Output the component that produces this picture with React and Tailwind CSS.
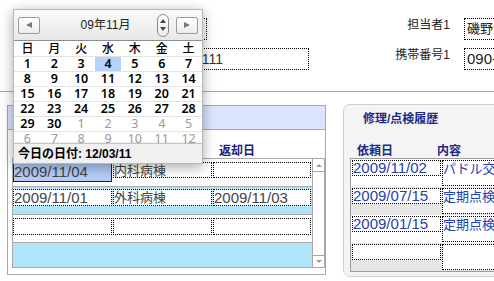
const weekDays = ["日", "月", "火", "水", "木", "金", "土"];

const dateRows = [
    [1, 2, 3, 4, 5, 6, 7],
    [8, 9, 10, 11, 12, 13, 14],
    [15, 16, 17, 18, 19, 20, 21],
    [22, 23, 24, 25, 26, 27, 28],
    [29, 30, "1", "2", "3", "4", "5"],
    ["6", "7", "8", "9", "10", "11", "12"],
];

const loans = [
    { out: "2009/11/04", ward: "内科病棟", back: "", active: true },
    { out: "2009/11/01", ward: "外科病棟", back: "2009/11/03" },
    { out: "", ward: "", back: "" },
    null,
];

const repairs = [
    { date: "2009/11/02", text: "パドル交換" },
    { date: "2009/07/15", text: "定期点検(" },
    { date: "2009/01/15", text: "定期点検" },
    { date: "", text: "" },
];

function Calendar() {
    return (
        <div className="absolute left-[13px] top-[9px] w-[190px] h-[155px] bg-white border border-[#b8b8b8] shadow-[0_3px_12px_rgba(0,0,0,0.35)] flex flex-col overflow-hidden">
            <div className="h-[31px] shrink-0 bg-gradient-to-b from-[#fafafa] to-[#e8e8e8] border-b border-[#8c8c8c] flex items-center px-[4px]">
                <button className="w-[22px] h-[17px] border border-[#9a9a9a] rounded-[2px] bg-gradient-to-b from-white to-[#ececec] flex items-center justify-center">
                    <span className="block w-0 h-0 border-y-[3px] border-y-transparent border-r-[6px] border-r-[#777]" />
                </button>
                <div className="flex-1 text-center text-[12px] text-[#222] pl-[14px]">09年11月</div>
                <div className="w-[12px] h-[23px] border border-[#8a8a8a] rounded-full bg-gradient-to-b from-white to-[#eee] flex flex-col items-center justify-center gap-[4px] mr-[7px]">
                    <span className="block w-0 h-0 border-x-[3px] border-x-transparent border-b-[4px] border-b-[#444]" />
                    <span className="block w-0 h-0 border-x-[3px] border-x-transparent border-t-[4px] border-t-[#444]" />
                </div>
                <button className="w-[22px] h-[17px] border border-[#9a9a9a] rounded-[2px] bg-gradient-to-b from-white to-[#ececec] flex items-center justify-center">
                    <span className="block w-0 h-0 border-y-[3px] border-y-transparent border-l-[6px] border-l-[#777]" />
                </button>
            </div>
            <div className="grid grid-cols-7 h-[16px] shrink-0 border-b border-[#e2e2e2]">
                {weekDays.map((d) => (
                    <div key={d} className="text-center text-[12px] leading-[16px] font-medium text-black">
                        {d}
                    </div>
                ))}
            </div>
            <div className="flex-1 overflow-hidden font-['Noto_Sans',sans-serif]">
                {dateRows.map((row, i) => (
                    <div key={i} className="grid grid-cols-7 h-[15px] border-b border-[#e4e4e4]">
                        {row.map((n) => (
                            <div
                                key={n}
                                className={
                                    "text-center text-[12.5px] leading-[14px] " +
                                    (typeof n === "string" ? "text-[#9a9a9a]" : "text-black font-semibold") +
                                    (n === 4 ? " bg-[#b5d3fb]" : "")
                                }
                            >
                                {n}
                            </div>
                        ))}
                    </div>
                ))}
            </div>
            <div className="h-[20px] shrink-0 bg-[#f0f0f0] border-t border-[#c4c4c4] shadow-[0_-1px_2px_rgba(0,0,0,0.08)] px-[4px] text-[12px] leading-[20px] font-bold text-black">
                今日の日付: 12/03/11
            </div>
        </div>
    );
}

function Field({ value, className = "" }) {
    const jp = /[^\x00-\x7f]/.test(value);
    return (
        <div
            className={
                "border border-dotted border-black bg-white text-[#444] whitespace-nowrap overflow-hidden " +
                (jp ? "text-[13px] leading-[15px] " : "text-[15px] leading-[15px] ") +
                className
            }
        >
            {value}
        </div>
    );
}

function LoanPanel() {
    return (
        <div className="ml-[7px] mt-[13px] w-[321px] h-[170px] border border-[#a8a8a8] bg-white flex flex-col">
            <div className="h-[24px] bg-[#dbe5ff] border-b border-[#a8a8a8]" />
            <div className="h-[28px] ml-[5px] grid grid-cols-[100px_100px_99px] items-end text-[12px] leading-[14px] font-bold text-[#1c1c80]">
                <div />
                <div />
                <div className="pl-[6px]">返却日</div>
            </div>
            <div className="ml-[4px] w-[313px] h-[110px] border border-[#a8a8a8] flex">
                <div className="w-[299px] flex flex-col">
                    {loans.map((r, i) => (
                        <div
                            key={i}
                            className={
                                (i % 2 === 1 ? "bg-[#afe4fb] " : "bg-white ") +
                                (i < 3 ? "h-[28px] border-b border-[#a8a8a8] " : "flex-1 ") +
                                "flex gap-[1px] items-start " +
                                (i === 1 ? "pt-[2px]" : "pt-[3px]")
                            }
                        >
                            {r && (
                                <>
                                    {r.active ? (
                                        <div className="w-[99px] h-[20px] border border-[#222] bg-[#b5cdf8] text-[15px] leading-[18px] text-[#444] overflow-hidden">
                                            {r.out}
                                        </div>
                                    ) : (
                                        <Field value={r.out} className="w-[99px] h-[17px]" />
                                    )}
                                    <Field value={r.ward} className={"w-[99px] " + (i === 0 ? "h-[16px]" : "h-[17px]")} />
                                    <Field value={r.back} className={"w-[98px] " + (i === 0 ? "h-[16px]" : "h-[17px]")} />
                                </>
                            )}
                        </div>
                    ))}
                </div>
                <div className="flex-1 border-l border-[#a8a8a8] bg-white flex flex-col justify-between">
                    <div className="h-[13px] border-b border-[#a8a8a8] flex items-center justify-center">
                        <span className="block w-0 h-0 border-x-[3px] border-x-transparent border-b-[3px] border-b-[#999]" />
                    </div>
                    <div className="h-[12px] border-t border-[#a8a8a8] flex items-center justify-center">
                        <span className="block w-0 h-0 border-x-[3px] border-x-transparent border-t-[3px] border-t-[#999]" />
                    </div>
                </div>
            </div>
        </div>
    );
}

function RepairPanel() {
    return (
        <div className="ml-[17px] mt-[12px] w-[170px] h-[173px] shrink-0 rounded-[7px] border border-[#cfcfcf] bg-[#f4f4f4] flex flex-col">
            <div className="h-[26px] pl-[19px] pt-[5px] text-[12px] font-bold text-[#1c2a88]">修理/点検履歴</div>
            <div className="h-[27px] flex items-end text-[12px] leading-[14px] font-bold text-[#1c2a88]">
                <div className="w-[93px] pl-[13px]">依頼日</div>
                <div>内容</div>
            </div>
            <div className="ml-[6px] h-[114px] border border-[#9c9c9c] border-r-0 flex flex-col overflow-hidden">
                {repairs.map((r, i) => (
                    <div key={i} className={"h-[28px] shrink-0 flex gap-[1px] pt-[1px] " + (i % 2 === 1 ? "bg-[#e6e6e6]" : "bg-white")}>
                        <div className="w-[89px] h-[16px] ml-[1px] border border-dotted border-black bg-white text-[15px] leading-[14px] text-[#1e40b0] whitespace-nowrap">
                            {r.date}
                        </div>
                        <div className="flex-1 h-[26px] border border-dotted border-black border-r-0 bg-white text-[13px] leading-[15px] text-[#1e40b0] whitespace-nowrap overflow-hidden">
                            {r.text}
                        </div>
                    </div>
                ))}
            </div>
        </div>
    );
}

export default function App() {
    return (
        <div className="relative w-[494px] h-[281px] bg-white overflow-hidden font-['Liberation_Sans','Noto_Sans_CJK_JP',sans-serif]">
            <div className="h-[92px] border-b border-[#a6a6a6] pt-[18px] flex flex-col gap-[8px]">
                <div className="flex h-[22px] shrink-0">
                    <div className="ml-[137px] w-[70px] shrink-0 border border-dotted border-black" />
                    <div className="w-[243px] shrink-0 text-right text-[12px] leading-[14px] text-[#222]">担当者1</div>
                    <div className="ml-[14px] w-[60px] shrink-0 border border-dotted border-black pl-[2px] text-[13px] leading-[20px] text-[#222] whitespace-nowrap">
                        磯野波平
                    </div>
                </div>
                <div className="flex h-[22px] shrink-0">
                    <div className="ml-[137px] w-[172px] shrink-0 border border-dotted border-black pl-[1px] text-[14px] leading-[20px] text-[#333]">
                        03-1234-1111
                    </div>
                    <div className="w-[141px] shrink-0 text-right text-[12px] leading-[14px] text-[#222]">携帯番号1</div>
                    <div className="ml-[14px] w-[60px] shrink-0 border border-dotted border-black pl-[2px] text-[15px] leading-[20px] text-[#222] whitespace-nowrap">
                        090-1234
                    </div>
                </div>
            </div>
            <div className="flex items-start">
                <LoanPanel />
                <RepairPanel />
            </div>
            <Calendar />
        </div>
    );
}
